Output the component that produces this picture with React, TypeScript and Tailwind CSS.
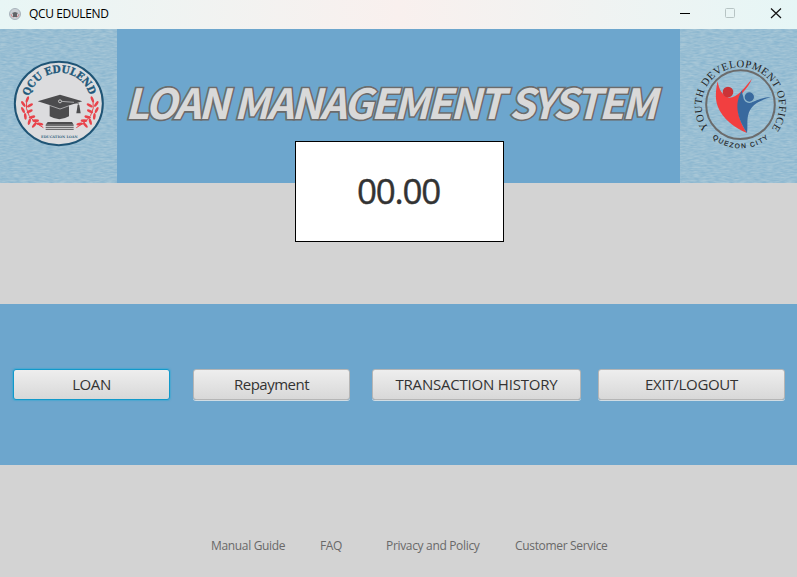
import React from "react";

const ui = "font-['Open_Sans','Noto_Sans',sans-serif]";

function Texture({ id }: { id: string }) {
  return (
    <>
      <filter id={id} x="0" y="0" width="100%" height="100%">
        <feTurbulence type="fractalNoise" baseFrequency="0.05 0.2" numOctaves={2} seed={4} />
        <feColorMatrix values="0 0 0 0 0.66  0 0 0 0 0.76  0 0 0 0 0.78  1.6 0 0 0 -0.3" />
      </filter>
      <rect y="-63" width="351" height="462" fill="#8bb6cf" />
      <rect y="-63" width="351" height="462" filter={`url(#${id})`} opacity="0.4" />
    </>
  );
}

const leaves = [
  [82, 148, -20], [70, 162, 35], [90, 166, -60], [69, 180, 25], [89, 184, -65], [76, 199, 5],
  [96, 201, -75], [88, 215, -15], [107, 212, -90], [103, 225, -40], [120, 222, -100],
];

function Laurel() {
  return (
    <g fill="#e8434b">
      <path d="M80 150Q70 203 130 233" fill="none" stroke="#e8434b" strokeWidth="3" />
      {leaves.map(([x, y, r], i) => (
        <ellipse key={i} cx={x} cy={y} rx="4" ry="10" transform={`rotate(${-r} ${x} ${y})`} />
      ))}
    </g>
  );
}

function LendLogo() {
  return (
    <svg width="117" height="154" viewBox="0 -63 351 462" className="block">
      <Texture id="paperLeft" />
      <ellipse cx="176.500" cy="160.500" rx="132" ry="125" fill="#dcdcde" stroke="#1f5475" strokeWidth="6" />
      <path id="arcName" d="M88 139A94 94 0 0 1 270 139" fill="none" />
      <text fill="#21587a" fontSize="31" fontWeight="700" stroke="#21587a" strokeWidth="1" className="font-['DejaVu_Serif',serif]">
        <textPath href="#arcName" textLength="244" lengthAdjust="spacingAndGlyphs" startOffset="0">QCU EDULEND</textPath>
      </text>
      <Laurel />
      <g transform="translate(359 0) scale(-1 1)"><Laurel /></g>
      <path d="M149 162V199Q178 216 207 199V162Z" fill="#4c4c4e" />
      <path d="M113 154L180 134L247 154L180 175Z" fill="#4c4c4e" />
      <path d="M148 166L180 177L208 167" fill="none" stroke="#d6d6d8" strokeWidth="2" />
      <path d="M184 154L235 160V172" fill="none" stroke="#4c4c4e" strokeWidth="2" />
      <path d="M184 154L222 157" stroke="#d6d6d8" strokeWidth="2" />
      <circle cx="180" cy="154" r="4.500" fill="#4c4c4e" stroke="#dedede" strokeWidth="2.500" />
      <path d="M233 165H238L242 190H229Z" fill="#4c4c4e" />
      <path d="M143 216H216L221 224H137Z" fill="#4c4c4e" />
      <path d="M137 226H221M137 232H221M137 238H221" stroke="#58585a" strokeWidth="3" />
      <text x="123" y="263" fontSize="10" fontWeight="700" textLength="110" fill="#376783" className="font-['DejaVu_Serif',serif]" lengthAdjust="spacingAndGlyphs">EDUCATION LOAN</text>
    </svg>
  );
}

function YouthLogo() {
  return (
    <svg width="117" height="154" viewBox="0 -63 351 462" className="block">
      <Texture id="paperRight" />
      <circle cx="181.500" cy="164" r="103" fill="none" stroke="#6b6b6b" strokeWidth="6" />
      <path id="arcTop" d="M86 234A116 116 0 1 1 279 230" fill="none" />
      <path id="arcBottom" d="M97 264A132 132 0 0 0 269 262" fill="none" />
      <text fontSize="32" fill="#222" className="font-['Liberation_Serif',serif]">
        <textPath href="#arcTop" textLength="508" startOffset="0">YOUTH DEVELOPMENT OFFICE</textPath>
      </text>
      <text fontSize="20" fill="#222" stroke="#222" strokeWidth=".5" className="font-['Liberation_Sans',sans-serif]">
        <textPath href="#arcBottom" textLength="182" startOffset="0">QUEZON CITY</textPath>
      </text>
      <path d="M113 94C117 119 126 136 147 143C173 143 195 111 216 86C204 117 180 128 175 155C170 184 181 220 201 249C165 235 127 207 113 169C104 144 108 116 113 94Z" fill="#f23f40" />
      <circle cx="144" cy="126" r="16" fill="#cb3337" />
      <path d="M187 118C184 133 191 147 207 155C226 158 240 141 273 142C237 151 216 164 207 187C199 207 204 232 201 249C179 217 167 181 174 151C177 137 183 128 187 118Z" fill="#38699e" />
      <circle cx="208" cy="141" r="16" fill="#38699e" stroke="#92b9cd" strokeWidth="4" />
    </svg>
  );
}

function ActionButton({ label, box, active, textStyle }: { label: string; box: string; active?: boolean; textStyle: string }) {
  const edge = active
    ? "border-[#1299ca] border-[1.5px] shadow-[0_0_1px_1px_#2ba9d680] h-[31px]"
    : "border-[#b5b5b5] border h-[31px] shadow-[0_1px_0_#d1dce3]";
  return (
    <button className={`${box} ${edge} shrink-0 rounded-[3px] bg-linear-to-b from-[#eeeeee] to-[#d8d8d8] flex items-center justify-center text-[#333] whitespace-nowrap`}>
      <span className={`${textStyle} leading-5 pb-[2px]`}>{label}</span>
    </button>
  );
}

export default function App() {
  return (
    <div className={`w-[797px] h-[577px] overflow-hidden bg-[#d3d3d3] flex flex-col ${ui}`}>
      <header className="h-[29px] shrink-0 flex items-center justify-between bg-linear-to-r from-[#e8f6f5] via-[#f9f0ee] to-[#e6f6f6]">
        <div className="flex items-center pl-[9px] pb-[2px]">
          <svg width="12" height="12" viewBox="0 0 12 12">
            <circle cx="6" cy="6" r="5.500" fill="#cbd0d5" stroke="#a8b3bb" />
            <path d="M2 6Q2 9 5 9M10 6Q10 9 7 9" stroke="#d38e91" fill="none" />
            <path d="M3 5L6 4L9 5L8 6V9H4V6Z" fill="#626468" />
          </svg>
          <span className="ml-2 text-[12px] leading-4 tracking-[-0.37px] text-black">QCU EDULEND</span>
        </div>
        <svg width="117" height="29" viewBox="0 0 117 29" fill="none">
          <path d="M0 13.500H10" stroke="#000" />
          <rect x="45.500" y="8.500" width="9" height="9" rx="1" stroke="#b7c4c4" />
          <path d="M91 8.500L101 18M101 8.500L91 18" stroke="#111" strokeWidth="1.200" />
        </svg>
      </header>

      <section className="relative h-[154px] shrink-0 flex bg-[#6da6cd]">
        <LendLogo />
        <h1 className="w-[563px] shrink-0 flex items-center whitespace-nowrap pl-[8px] pb-[9px] text-[41.5px] leading-none font-bold italic tracking-[-2.42px] text-[#d9d9d9] [-webkit-text-stroke:3.2px_#6b6b6b] [paint-order:stroke_fill] font-['Noto_Sans_CJK_SC',sans-serif]">
          LOAN MANAGEMENT SYSTEM
        </h1>
        <YouthLogo />
        <div className="absolute left-[295px] top-[112px] w-[209px] h-[101px] border border-black bg-white flex justify-center">
          <span className="mt-[24px] -ml-[2px] text-[35px] leading-[49px] font-[370] tracking-[-1.2px] text-[#333] [-webkit-text-stroke:0.4px_#333] [font-variation-settings:'wght'_360]">00.00</span>
        </div>
      </section>

      <main className="mt-[121px] h-[161px] shrink-0 bg-[#6da6cd] flex items-start pt-[65px] pl-[13px]">
        <ActionButton label="LOAN" box="w-[157px]" active textStyle="text-[15px] tracking-[-0.4px]" />
        <ActionButton label="Repayment" box="w-[157px] ml-[23px]" textStyle="text-[15px] tracking-[-0.5px]" />
        <ActionButton label="TRANSACTION HISTORY" box="w-[209px] ml-[22px]" textStyle="text-[15px] tracking-[-0.2px]" />
        <ActionButton label="EXIT/LOGOUT" box="w-[187px] ml-[17px]" textStyle="text-[15px] tracking-[-0.3px]" />
      </main>

      <footer className="flex pt-[73px] pl-[211px] text-[12px] leading-4 tracking-[-0.33px] text-[#696969] whitespace-nowrap">
        <a className="w-[109px]">Manual Guide</a>
        <a className="w-[66px]">FAQ</a>
        <a className="w-[129px]">Privacy and Policy</a>
        <a>Customer Service</a>
      </footer>
    </div>
  );
}
